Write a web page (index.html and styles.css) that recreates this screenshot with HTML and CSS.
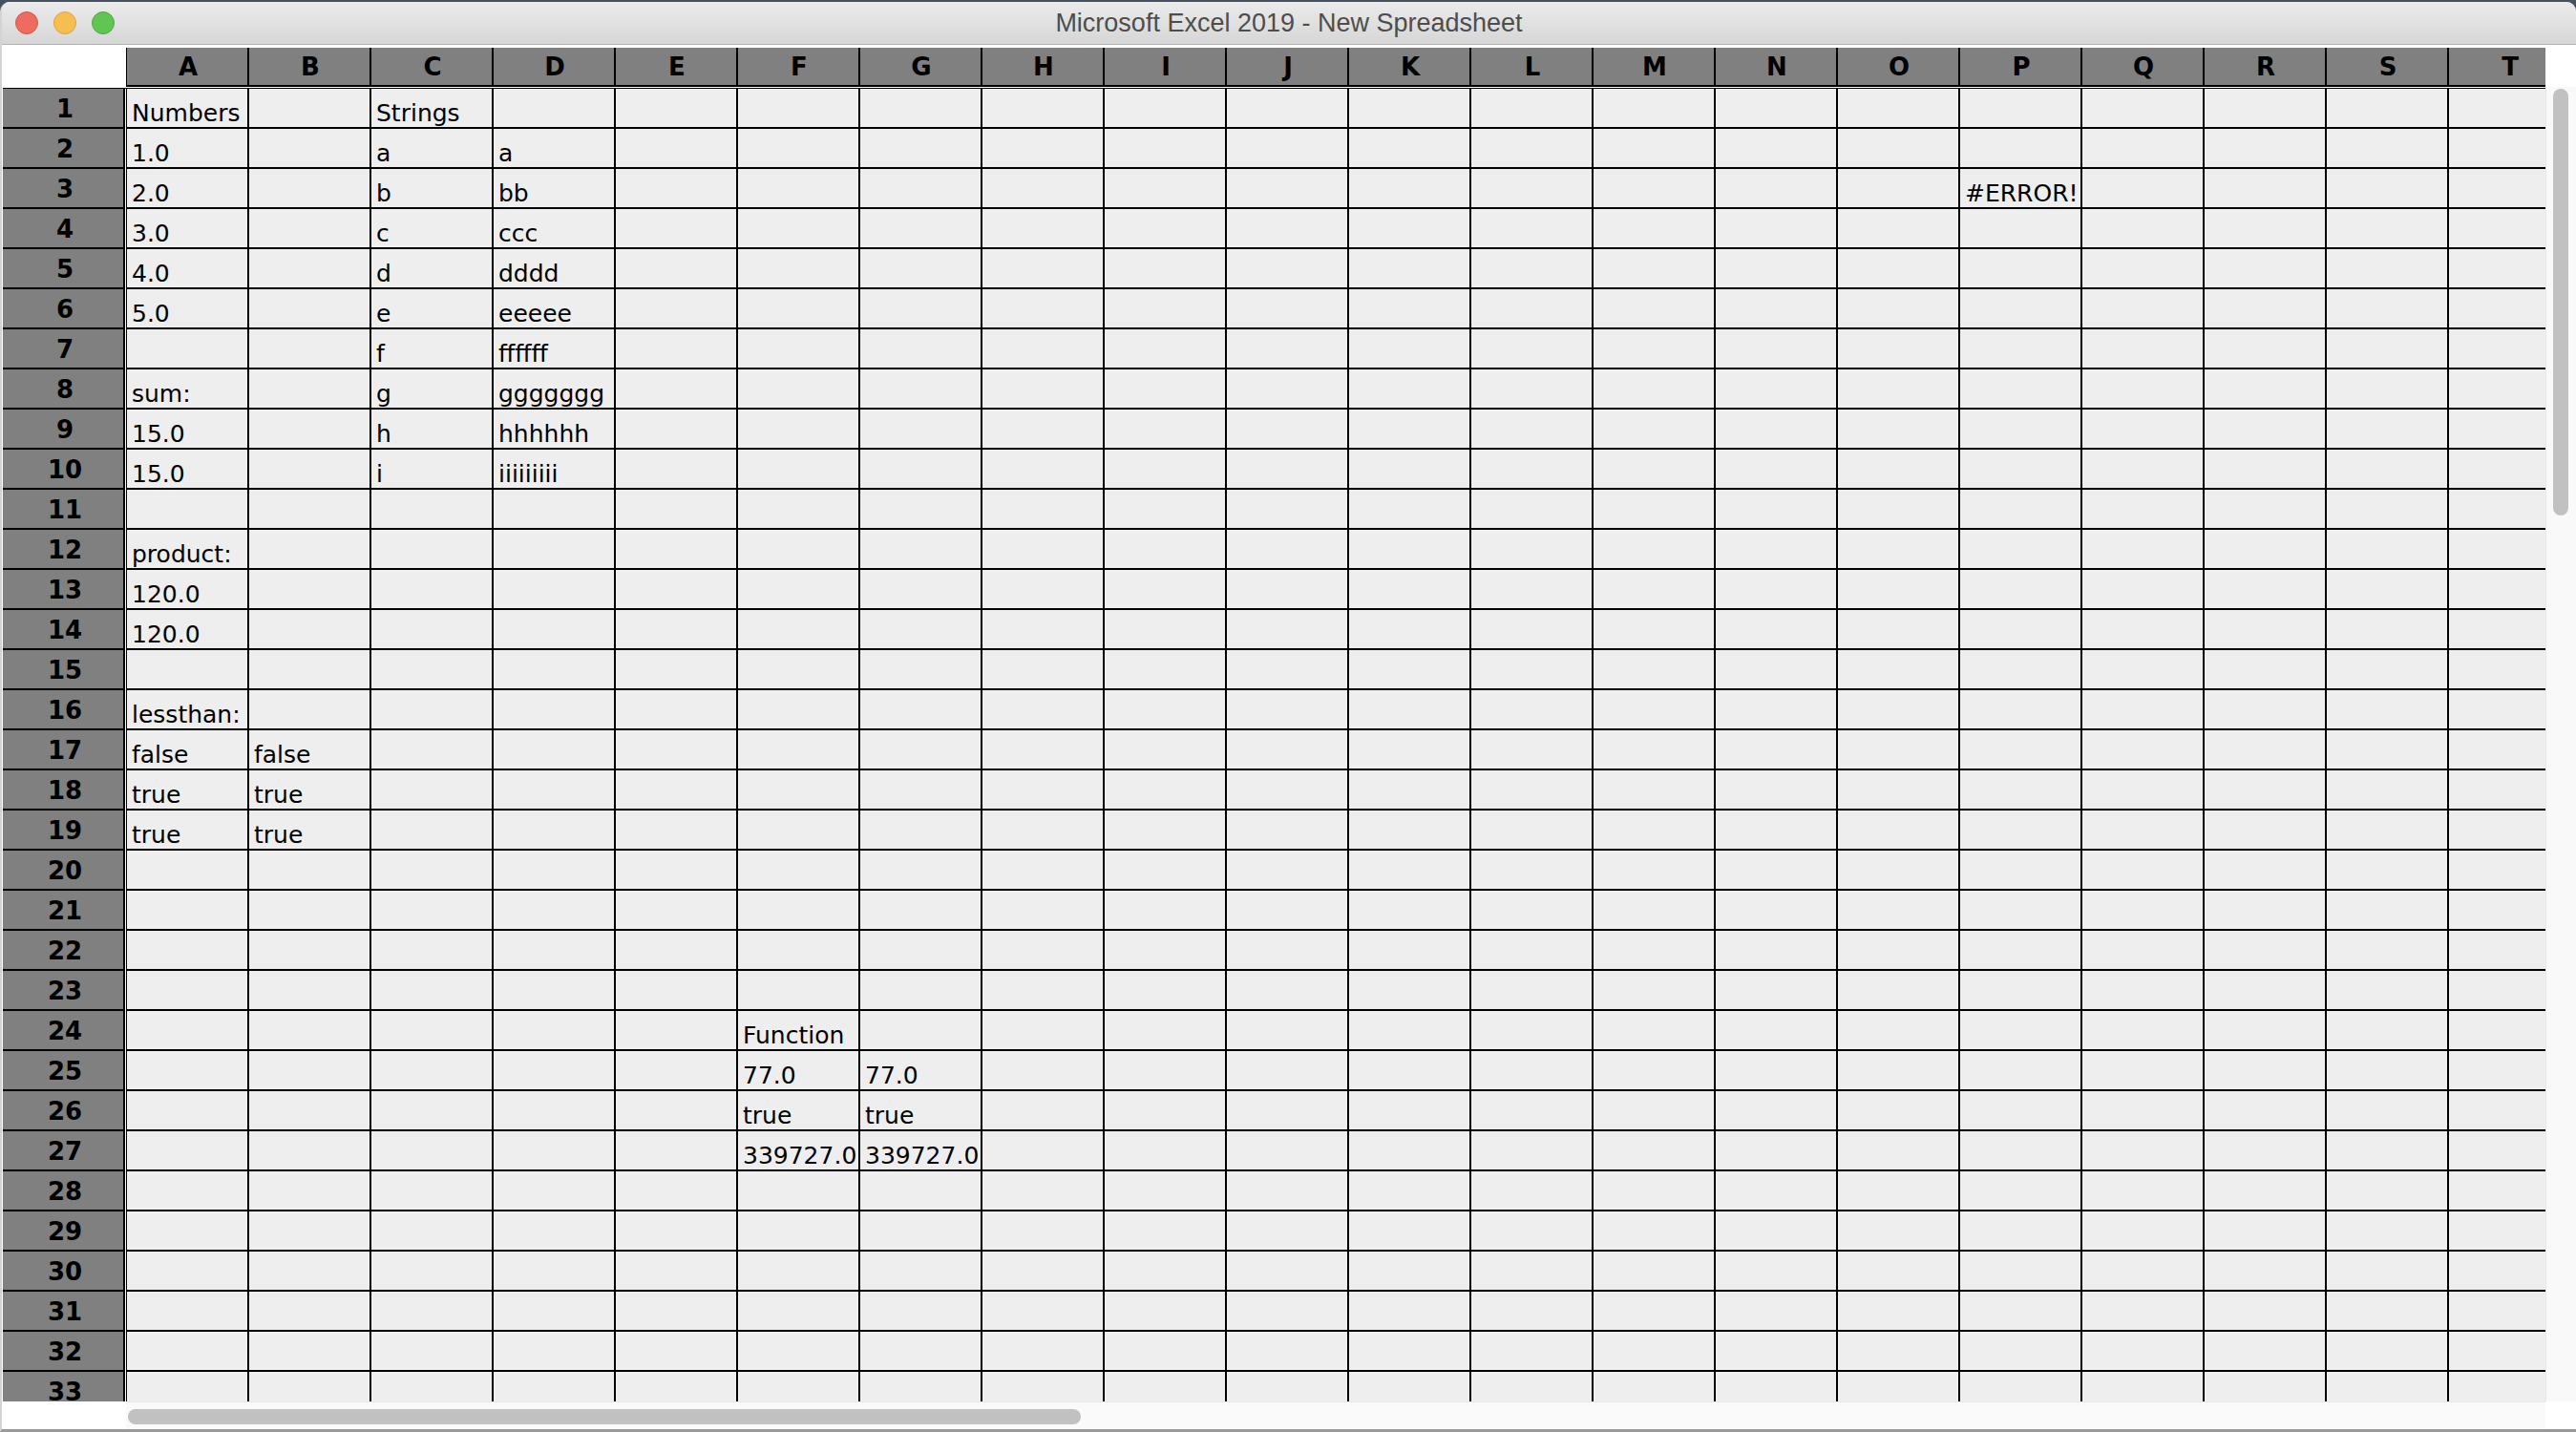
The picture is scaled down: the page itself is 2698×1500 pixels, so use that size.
FILE: index.html
```html
<!DOCTYPE html>
<html>
<head>
<meta charset="utf-8">
<title>Microsoft Excel 2019 - New Spreadsheet</title>
<link rel="stylesheet" href="styles.css">
</head>
<body>
<div class="window">
  <div class="titlebar">
    <div class="lights"><span class="light red"></span><span class="light yellow"></span><span class="light green"></span></div>
    <div class="title">Microsoft Excel 2019 - New Spreadsheet</div>
    <div></div>
  </div>
  <div class="content">
    <div class="sheet">
      <div class="viewport">
        <div class="hdr">
          <div class="corner"></div>
          <div class="cols"><span>A</span><span>B</span><span>C</span><span>D</span><span>E</span><span>F</span><span>G</span><span>H</span><span>I</span><span>J</span><span>K</span><span>L</span><span>M</span><span>N</span><span>O</span><span>P</span><span>Q</span><span>R</span><span>S</span><span>T</span></div>
        </div>
        <div class="rows">
          <div class="row"><div class="rh">1</div><div class="cells"><span>Numbers</span><span></span><span>Strings</span><span></span><span></span><span></span><span></span><span></span><span></span><span></span><span></span><span></span><span></span><span></span><span></span><span></span><span></span><span></span><span></span><span></span></div></div>
          <div class="row"><div class="rh">2</div><div class="cells"><span>1.0</span><span></span><span>a</span><span>a</span><span></span><span></span><span></span><span></span><span></span><span></span><span></span><span></span><span></span><span></span><span></span><span></span><span></span><span></span><span></span><span></span></div></div>
          <div class="row"><div class="rh">3</div><div class="cells"><span>2.0</span><span></span><span>b</span><span>bb</span><span></span><span></span><span></span><span></span><span></span><span></span><span></span><span></span><span></span><span></span><span></span><span>#ERROR!</span><span></span><span></span><span></span><span></span></div></div>
          <div class="row"><div class="rh">4</div><div class="cells"><span>3.0</span><span></span><span>c</span><span>ccc</span><span></span><span></span><span></span><span></span><span></span><span></span><span></span><span></span><span></span><span></span><span></span><span></span><span></span><span></span><span></span><span></span></div></div>
          <div class="row"><div class="rh">5</div><div class="cells"><span>4.0</span><span></span><span>d</span><span>dddd</span><span></span><span></span><span></span><span></span><span></span><span></span><span></span><span></span><span></span><span></span><span></span><span></span><span></span><span></span><span></span><span></span></div></div>
          <div class="row"><div class="rh">6</div><div class="cells"><span>5.0</span><span></span><span>e</span><span>eeeee</span><span></span><span></span><span></span><span></span><span></span><span></span><span></span><span></span><span></span><span></span><span></span><span></span><span></span><span></span><span></span><span></span></div></div>
          <div class="row"><div class="rh">7</div><div class="cells"><span></span><span></span><span>f</span><span>ffffff</span><span></span><span></span><span></span><span></span><span></span><span></span><span></span><span></span><span></span><span></span><span></span><span></span><span></span><span></span><span></span><span></span></div></div>
          <div class="row"><div class="rh">8</div><div class="cells"><span>sum:</span><span></span><span>g</span><span>ggggggg</span><span></span><span></span><span></span><span></span><span></span><span></span><span></span><span></span><span></span><span></span><span></span><span></span><span></span><span></span><span></span><span></span></div></div>
          <div class="row"><div class="rh">9</div><div class="cells"><span>15.0</span><span></span><span>h</span><span>hhhhhh</span><span></span><span></span><span></span><span></span><span></span><span></span><span></span><span></span><span></span><span></span><span></span><span></span><span></span><span></span><span></span><span></span></div></div>
          <div class="row"><div class="rh">10</div><div class="cells"><span>15.0</span><span></span><span>i</span><span>iiiiiiiii</span><span></span><span></span><span></span><span></span><span></span><span></span><span></span><span></span><span></span><span></span><span></span><span></span><span></span><span></span><span></span><span></span></div></div>
          <div class="row"><div class="rh">11</div><div class="cells"><span></span><span></span><span></span><span></span><span></span><span></span><span></span><span></span><span></span><span></span><span></span><span></span><span></span><span></span><span></span><span></span><span></span><span></span><span></span><span></span></div></div>
          <div class="row"><div class="rh">12</div><div class="cells"><span>product:</span><span></span><span></span><span></span><span></span><span></span><span></span><span></span><span></span><span></span><span></span><span></span><span></span><span></span><span></span><span></span><span></span><span></span><span></span><span></span></div></div>
          <div class="row"><div class="rh">13</div><div class="cells"><span>120.0</span><span></span><span></span><span></span><span></span><span></span><span></span><span></span><span></span><span></span><span></span><span></span><span></span><span></span><span></span><span></span><span></span><span></span><span></span><span></span></div></div>
          <div class="row"><div class="rh">14</div><div class="cells"><span>120.0</span><span></span><span></span><span></span><span></span><span></span><span></span><span></span><span></span><span></span><span></span><span></span><span></span><span></span><span></span><span></span><span></span><span></span><span></span><span></span></div></div>
          <div class="row"><div class="rh">15</div><div class="cells"><span></span><span></span><span></span><span></span><span></span><span></span><span></span><span></span><span></span><span></span><span></span><span></span><span></span><span></span><span></span><span></span><span></span><span></span><span></span><span></span></div></div>
          <div class="row"><div class="rh">16</div><div class="cells"><span>lessthan:</span><span></span><span></span><span></span><span></span><span></span><span></span><span></span><span></span><span></span><span></span><span></span><span></span><span></span><span></span><span></span><span></span><span></span><span></span><span></span></div></div>
          <div class="row"><div class="rh">17</div><div class="cells"><span>false</span><span>false</span><span></span><span></span><span></span><span></span><span></span><span></span><span></span><span></span><span></span><span></span><span></span><span></span><span></span><span></span><span></span><span></span><span></span><span></span></div></div>
          <div class="row"><div class="rh">18</div><div class="cells"><span>true</span><span>true</span><span></span><span></span><span></span><span></span><span></span><span></span><span></span><span></span><span></span><span></span><span></span><span></span><span></span><span></span><span></span><span></span><span></span><span></span></div></div>
          <div class="row"><div class="rh">19</div><div class="cells"><span>true</span><span>true</span><span></span><span></span><span></span><span></span><span></span><span></span><span></span><span></span><span></span><span></span><span></span><span></span><span></span><span></span><span></span><span></span><span></span><span></span></div></div>
          <div class="row"><div class="rh">20</div><div class="cells"><span></span><span></span><span></span><span></span><span></span><span></span><span></span><span></span><span></span><span></span><span></span><span></span><span></span><span></span><span></span><span></span><span></span><span></span><span></span><span></span></div></div>
          <div class="row"><div class="rh">21</div><div class="cells"><span></span><span></span><span></span><span></span><span></span><span></span><span></span><span></span><span></span><span></span><span></span><span></span><span></span><span></span><span></span><span></span><span></span><span></span><span></span><span></span></div></div>
          <div class="row"><div class="rh">22</div><div class="cells"><span></span><span></span><span></span><span></span><span></span><span></span><span></span><span></span><span></span><span></span><span></span><span></span><span></span><span></span><span></span><span></span><span></span><span></span><span></span><span></span></div></div>
          <div class="row"><div class="rh">23</div><div class="cells"><span></span><span></span><span></span><span></span><span></span><span></span><span></span><span></span><span></span><span></span><span></span><span></span><span></span><span></span><span></span><span></span><span></span><span></span><span></span><span></span></div></div>
          <div class="row"><div class="rh">24</div><div class="cells"><span></span><span></span><span></span><span></span><span></span><span>Function</span><span></span><span></span><span></span><span></span><span></span><span></span><span></span><span></span><span></span><span></span><span></span><span></span><span></span><span></span></div></div>
          <div class="row"><div class="rh">25</div><div class="cells"><span></span><span></span><span></span><span></span><span></span><span>77.0</span><span>77.0</span><span></span><span></span><span></span><span></span><span></span><span></span><span></span><span></span><span></span><span></span><span></span><span></span><span></span></div></div>
          <div class="row"><div class="rh">26</div><div class="cells"><span></span><span></span><span></span><span></span><span></span><span>true</span><span>true</span><span></span><span></span><span></span><span></span><span></span><span></span><span></span><span></span><span></span><span></span><span></span><span></span><span></span></div></div>
          <div class="row"><div class="rh">27</div><div class="cells"><span></span><span></span><span></span><span></span><span></span><span>339727.0</span><span>339727.0</span><span></span><span></span><span></span><span></span><span></span><span></span><span></span><span></span><span></span><span></span><span></span><span></span><span></span></div></div>
          <div class="row"><div class="rh">28</div><div class="cells"><span></span><span></span><span></span><span></span><span></span><span></span><span></span><span></span><span></span><span></span><span></span><span></span><span></span><span></span><span></span><span></span><span></span><span></span><span></span><span></span></div></div>
          <div class="row"><div class="rh">29</div><div class="cells"><span></span><span></span><span></span><span></span><span></span><span></span><span></span><span></span><span></span><span></span><span></span><span></span><span></span><span></span><span></span><span></span><span></span><span></span><span></span><span></span></div></div>
          <div class="row"><div class="rh">30</div><div class="cells"><span></span><span></span><span></span><span></span><span></span><span></span><span></span><span></span><span></span><span></span><span></span><span></span><span></span><span></span><span></span><span></span><span></span><span></span><span></span><span></span></div></div>
          <div class="row"><div class="rh">31</div><div class="cells"><span></span><span></span><span></span><span></span><span></span><span></span><span></span><span></span><span></span><span></span><span></span><span></span><span></span><span></span><span></span><span></span><span></span><span></span><span></span><span></span></div></div>
          <div class="row"><div class="rh">32</div><div class="cells"><span></span><span></span><span></span><span></span><span></span><span></span><span></span><span></span><span></span><span></span><span></span><span></span><span></span><span></span><span></span><span></span><span></span><span></span><span></span><span></span></div></div>
          <div class="row"><div class="rh">33</div><div class="cells"><span></span><span></span><span></span><span></span><span></span><span></span><span></span><span></span><span></span><span></span><span></span><span></span><span></span><span></span><span></span><span></span><span></span><span></span><span></span><span></span></div></div>
        </div>
      </div>
      <div class="vscroll">
        <div class="vs-top"></div>
        <div class="vs-track"><div class="vs-thumb"></div></div>
      </div>
    </div>
    <div class="hbar">
      <div class="hb-left"></div>
      <div class="hb-track"><div class="hb-thumb"></div></div>
      <div class="hb-right"></div>
    </div>
  </div>
</div>
</body>
</html>
```
FILE: styles.css
```css
* { box-sizing: border-box; }
html, body { margin: 0; padding: 0; }
body {
  width: 2698px;
  height: 1500px;
  overflow: hidden;
  background: #46525f;
  font-family: "DejaVu Sans", "Noto Sans", sans-serif;
}
.window {
  margin-top: 2px;
  height: 1498px;
  display: flex;
  flex-direction: column;
  background: #ffffff;
  border-radius: 10px 10px 0 0;
  border-left: 2px solid #d4d4d4;
  border-bottom: 3px solid #9a9a9a;
  overflow: hidden;
}
.titlebar {
  flex: none;
  height: 45px;
  display: grid;
  grid-template-columns: 1fr auto 1fr;
  align-items: center;
  background: linear-gradient(#ebebeb, #d6d6d6);
  border-bottom: 1px solid #b2b2b2;
}
.lights {
  display: flex;
  gap: 16px;
  padding-left: 14px;
}
.light {
  width: 24px;
  height: 24px;
  border-radius: 50%;
}
.red { background: #ee6b60; border: 1px solid #d5544b; }
.yellow { background: #f6be50; border: 1px solid #dba23c; }
.green { background: #61c554; border: 1px solid #4ea83f; }
.title {
  font-family: "Liberation Sans", Arial, sans-serif;
  font-size: 27px;
  color: #4d4d4d;
}
.content {
  flex: 1;
  display: flex;
  flex-direction: column;
  padding: 3px 0 0 1px;
}
.sheet {
  flex: none;
  height: 1418px;
  display: flex;
}
.viewport {
  width: 2663px;
  flex: none;
  overflow: hidden;
  display: flex;
  flex-direction: column;
}
.hdr {
  flex: none;
  display: flex;
  height: 41px;
  margin-bottom: 1px;
}
.corner {
  width: 129px;
  flex: none;
}
.cols {
  display: flex;
  border-left: 1px solid #000;
}
.cols > span {
  width: 128px;
  flex: none;
  background: #808080;
  border-right: 2px solid #000;
  border-bottom: 2px solid #000;
  display: flex;
  align-items: center;
  justify-content: center;
  padding-left: 2px;
  font-weight: bold;
  font-size: 26px;
  color: #000;
}
.rows {
  flex: none;
  border-top: 1px solid #000;
}
.row {
  display: flex;
  height: 42px;
}
.rh {
  width: 128px;
  flex: none;
  background: #808080;
  border-right: 2px solid #000;
  border-bottom: 2px solid #000;
  display: flex;
  align-items: center;
  justify-content: center;
  padding: 1px 0 0 4px;
  font-weight: bold;
  font-size: 26px;
  color: #000;
}
.cells {
  display: flex;
  margin-left: 1px;
  border-left: 1px solid #000;
}
.cells > span {
  width: 128px;
  flex: none;
  background: #eeeeee;
  border-right: 2px solid #000;
  border-bottom: 2px solid #000;
  display: flex;
  align-items: flex-end;
  padding: 0 1px 0 5px;
  font-size: 25px;
  line-height: 28px;
  color: #000;
  white-space: nowrap;
  overflow: hidden;
}
.vscroll {
  width: 32px;
  flex: none;
  display: flex;
  flex-direction: column;
}
.vs-top {
  height: 41px;
  flex: none;
}
.vs-track {
  flex: 1;
  background: #f9f9f9;
  border-left: 1px solid #e8e8e8;
  padding: 2px 8px 0 7px;
}
.vs-thumb {
  width: 16px;
  height: 447px;
  border-radius: 8px;
  background: #c1c1c1;
}
.hbar {
  flex: 1;
  display: flex;
}
.hb-left {
  width: 129px;
  flex: none;
}
.hb-track {
  width: 2534px;
  flex: none;
  background: #fafafa;
  border-top: 1px solid #e8e8e8;
  padding: 7px 0 0 2px;
}
.hb-thumb {
  width: 998px;
  height: 16px;
  border-radius: 8px;
  background: #c1c1c1;
}
.hb-right {
  flex: 1;
}
```
